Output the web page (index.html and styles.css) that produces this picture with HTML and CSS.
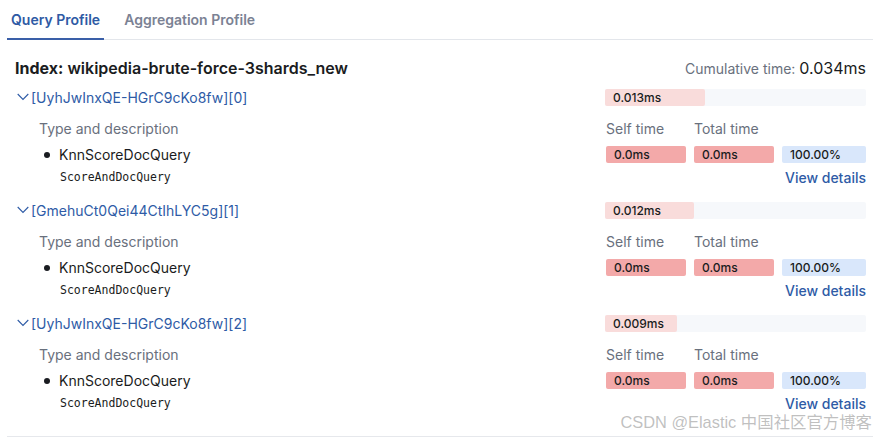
FILE: index.html
```html
<!DOCTYPE html>
<html>
<head>
<meta charset="utf-8">
<link rel="stylesheet" href="styles.css">
</head>
<body>
<div class="page">
  <div class="tabs">
    <div class="tab active">Query Profile</div>
    <div class="tab">Aggregation Profile</div>
  </div>
  <div class="content">
    <div class="index-row">
      <div class="index-title"><b>Index:</b> wikipedia-brute-force-3shards_new</div>
      <div class="cumulative">Cumulative time: <span class="cum-val">0.034ms</span></div>
    </div>

    <div class="shard">
      <div class="row head">
        <div class="left shard-name">
          <svg class="chev" width="12" height="8" viewBox="0 0 12 8"><path d="M0.7 1 L6 6.5 L11.3 1" fill="none" stroke="#2e5ba6" stroke-width="1.1"/></svg>
          <span>[UyhJwInxQE-HGrC9cKo8fw][0]</span>
        </div>
        <div class="right"><div class="bar"><div class="fill" style="width:100px"></div><span class="bar-text">0.013ms</span></div></div>
      </div>
      <div class="row labels">
        <div class="left lbl type">Type and description</div>
        <div class="right cols"><span class="lbl">Self time</span><span class="lbl">Total time</span></div>
      </div>
      <div class="row query">
        <div class="left qname"><span class="dot"></span>KnnScoreDocQuery</div>
        <div class="right cols"><span class="badge red">0.0ms</span><span class="badge red">0.0ms</span><span class="badge blue">100.00%</span></div>
      </div>
      <div class="row mono-row">
        <div class="left mono">ScoreAndDocQuery</div>
        <div class="right link">View details</div>
      </div>
    </div>

    <div class="shard">
      <div class="row head">
        <div class="left shard-name">
          <svg class="chev" width="12" height="8" viewBox="0 0 12 8"><path d="M0.7 1 L6 6.5 L11.3 1" fill="none" stroke="#2e5ba6" stroke-width="1.1"/></svg>
          <span>[GmehuCt0Qei44CtIhLYC5g][1]</span>
        </div>
        <div class="right"><div class="bar"><div class="fill" style="width:89px"></div><span class="bar-text">0.012ms</span></div></div>
      </div>
      <div class="row labels">
        <div class="left lbl type">Type and description</div>
        <div class="right cols"><span class="lbl">Self time</span><span class="lbl">Total time</span></div>
      </div>
      <div class="row query">
        <div class="left qname"><span class="dot"></span>KnnScoreDocQuery</div>
        <div class="right cols"><span class="badge red">0.0ms</span><span class="badge red">0.0ms</span><span class="badge blue">100.00%</span></div>
      </div>
      <div class="row mono-row">
        <div class="left mono">ScoreAndDocQuery</div>
        <div class="right link">View details</div>
      </div>
    </div>

    <div class="shard">
      <div class="row head">
        <div class="left shard-name">
          <svg class="chev" width="12" height="8" viewBox="0 0 12 8"><path d="M0.7 1 L6 6.5 L11.3 1" fill="none" stroke="#2e5ba6" stroke-width="1.1"/></svg>
          <span>[UyhJwInxQE-HGrC9cKo8fw][2]</span>
        </div>
        <div class="right"><div class="bar"><div class="fill" style="width:72px"></div><span class="bar-text">0.009ms</span></div></div>
      </div>
      <div class="row labels">
        <div class="left lbl type">Type and description</div>
        <div class="right cols"><span class="lbl">Self time</span><span class="lbl">Total time</span></div>
      </div>
      <div class="row query">
        <div class="left qname"><span class="dot"></span>KnnScoreDocQuery</div>
        <div class="right cols"><span class="badge red">0.0ms</span><span class="badge red">0.0ms</span><span class="badge blue">100.00%</span></div>
      </div>
      <div class="row mono-row">
        <div class="left mono">ScoreAndDocQuery</div>
        <div class="right link">View details</div>
      </div>
    </div>
  </div>
  <div class="watermark">CSDN @Elastic 中国社区官方博客</div>
</div>
</body>
</html>
```
FILE: styles.css
```css
* { box-sizing: border-box; }
html, body { margin: 0; padding: 0; background: #fff; }
body {
  font-family: Inter, "Noto Sans", sans-serif;
  color: #343741;
  width: 877px;
  height: 439px;
  overflow: hidden;
}
.page {
  position: relative;
  margin: 0 4px 0 7px;
  border-bottom: 1px solid #e6e8ec;
  height: 437px;
}
.tabs {
  display: flex;
  gap: 16px;
  height: 40px;
  border-bottom: 1px solid #e3e6eb;
}
.tab {
  font-size: 14px;
  font-weight: 600;
  color: #7b8294;
  padding: 0 4px;
  line-height: 39px;
  height: 40px;
  margin-bottom: -1px;
}
.tab.active {
  color: #2e5aa4;
  border-bottom: 2px solid #3a5fa8;
}
.content {
  padding: 16px 7px 0 8px;
}
.index-row {
  display: flex;
  justify-content: space-between;
  align-items: center;
  height: 24px;
  margin-bottom: 5px;
}
.index-title {
  font-size: 16px;
  font-weight: 600;
  color: #1a1c21;
}
.index-title b { font-weight: 700; }
.cumulative {
  font-size: 14px;
  color: #69707d;
}
.cum-val { font-size: 16px; color: #1a1c21; }
.shard {
  height: 113px;
}
.row {
  display: flex;
  align-items: center;
}
.left { flex: 1; }
.right { width: 260px; }
.row.head { height: 24px; margin-bottom: 9px; }
.row.labels { height: 20px; margin-bottom: 6px; }
.row.query { height: 20px; margin-bottom: 4px; }
.row.mono-row { height: 18px; }
.shard-name {
  display: flex;
  align-items: center;
  font-size: 14px;
  color: #2e5ba6;
  padding-left: 2px;
}
.chev { margin-right: 2px; margin-top: -1px; }
.bar {
  position: relative;
  height: 17px;
  background: #f6f8fb;
  border-radius: 2px;
  margin-left: -1px;
  width: 261px;
}
.fill {
  height: 17px;
  background: #f9dcdb;
  border-radius: 2px;
}
.bar-text {
  position: absolute;
  left: 8px;
  top: 0;
  line-height: 17px;
  font-size: 12px;
  font-weight: 500;
  color: #1a1c21;
}
.lbl {
  font-size: 14px;
  color: #69707d;
}
.type { padding-left: 24px; }
.cols {
  display: grid;
  grid-template-columns: 80px 80px 84px;
  column-gap: 8px;
}
.qname {
  display: flex;
  align-items: center;
  font-size: 14px;
  color: #1a1c21;
  padding-left: 45px;
}
.dot {
  width: 6px;
  height: 6px;
  border-radius: 50%;
  background: #1a1c21;
  margin: 2px 9px 0 -16px;
}
.badge {
  display: block;
  height: 17px;
  line-height: 17px;
  font-size: 12px;
  font-weight: 500;
  color: #1a1c21;
  padding-left: 8px;
  border-radius: 2px;
}
.badge.red { background: #f3a9a9; }
.badge.blue { background: #d9e7fb; }
.mono {
  font-family: "DejaVu Sans Mono", "Liberation Mono", monospace;
  font-size: 11.5px;
  color: #1a1c21;
  padding-left: 45px;
}
.link {
  text-align: right;
  font-size: 14px;
  font-weight: 500;
  color: #2e5ba6;
}
.watermark {
  position: absolute;
  right: 1px;
  bottom: 3px;
  font-size: 16.4px;
  color: rgba(150, 150, 150, 0.6);
  font-family: "Liberation Sans", "Noto Sans CJK SC", sans-serif;
}
```
